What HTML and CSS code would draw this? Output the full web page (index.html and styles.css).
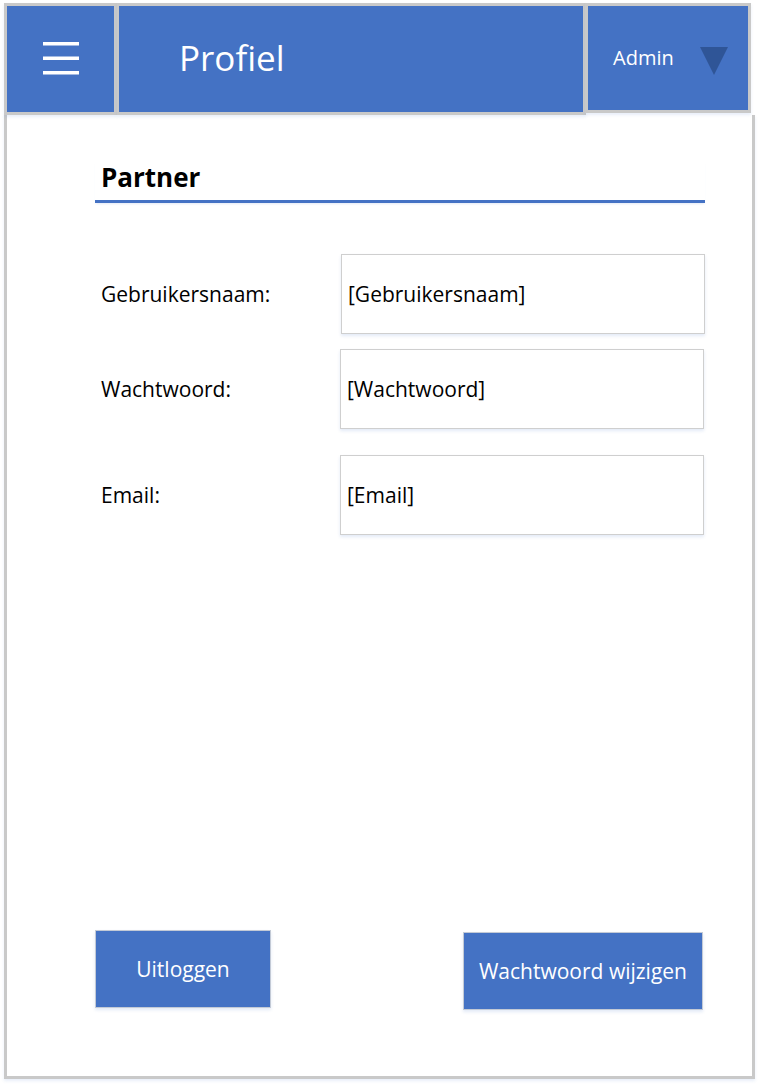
FILE: index.html
```html
<!DOCTYPE html>
<html lang="nl">
<head>
<meta charset="utf-8">
<title>Profiel</title>
<link rel="stylesheet" href="styles.css">
</head>
<body>
<div class="page">
  <header class="topbar">
    <div class="box menu-box">
      <svg class="hamburger" width="36" height="33" viewBox="0 0 36 33" aria-hidden="true">
        <rect x="0" y="0" width="36" height="3.5" fill="#fff"/>
        <rect x="0" y="14.5" width="36" height="3.5" fill="#fff"/>
        <rect x="0" y="29" width="36" height="3.5" fill="#fff"/>
      </svg>
    </div>
    <div class="box title-box"><h1 class="title">Profiel</h1></div>
    <div class="box user-box">
      <span class="user-name">Admin</span>
      <svg class="caret" width="28" height="28" viewBox="0 0 28 28" aria-hidden="true">
        <polygon points="0,0 28,0 14,28" fill="#2F5597"/>
      </svg>
    </div>
  </header>
  <main class="frame">
    <section class="profile">
      <h2 class="section-title">Partner</h2>
      <div class="field field-first">
        <span class="field-label">Gebruikersnaam:</span>
        <div class="field-input">[Gebruikersnaam]</div>
      </div>
      <div class="field field-second">
        <span class="field-label">Wachtwoord:</span>
        <div class="field-input">[Wachtwoord]</div>
      </div>
      <div class="field field-third">
        <span class="field-label">Email:</span>
        <div class="field-input">[Email]</div>
      </div>
    </section>
    <div class="actions">
      <button class="btn btn-logout">Uitloggen</button>
      <button class="btn btn-change">Wachtwoord wijzigen</button>
    </div>
  </main>
</div>
</body>
</html>
```
FILE: styles.css
```css
* { box-sizing: border-box; }

html, body {
  margin: 0;
  padding: 0;
  background: #ffffff;
}

body {
  font-family: "Open Sans", "Noto Sans", "DejaVu Sans", sans-serif;
  color: #000;
}

.page {
  width: 758px;
  height: 1087px;
  padding: 3px 5px 0 4px;
}

.topbar {
  display: flex;
  height: 112px;
  position: relative;
  z-index: 1;
}

.box {
  background: #4472C4;
  border: 3px solid #c9c9c9;
  box-shadow: 0 2px 3px rgba(68, 114, 196, 0.12);
}

.menu-box {
  width: 113px;
  display: flex;
  align-items: center;
  justify-content: center;
}

.hamburger { display: block; margin-bottom: 2px; }

.title-box {
  width: 469px;
  border-left-width: 2px;
  display: flex;
  align-items: center;
  padding-left: 60px;
}

.title {
  margin: 0;
  font-weight: 400;
  font-size: 35px;
  color: #fff;
  line-height: 1;
  padding-bottom: 4px;
}

.user-box {
  width: 166px;
  height: 110px;
  margin-left: -1px;
  display: flex;
  align-items: center;
  padding-left: 25px;
}

.user-name {
  color: #fff;
  font-size: 20px;
  padding-bottom: 2px;
}

.caret {
  display: block;
  margin-left: 26px;
  margin-top: 6px;
}

.frame {
  height: 964px;
  border: 3px solid #c9c9c9;
  border-top: 0;
  display: flex;
  flex-direction: column;
  box-shadow: 0 2px 3px rgba(68, 114, 196, 0.12);
  margin-right: -2px;
}

.profile {
  margin-left: 88px;
  width: 610px;
  padding-top: 47px;
}

.section-title {
  margin: 0;
  padding: 0 0 8px 6px;
  font-size: 26px;
  font-weight: 700;
  line-height: 30px;
  border-bottom: 3px solid #4472C4;
  box-shadow: 0 2px 2px -1px rgba(68, 114, 196, 0.15);
}

.field {
  display: flex;
  align-items: center;
}

.field-first { margin-top: 51px; }
.field-second { margin-top: 15px; margin-right: 1px; }
.field-third { margin-top: 26px; margin-right: 1px; }

.field-label {
  width: 245px;
  padding-left: 6px;
  font-size: 21px;
}

.field-first .field-label { width: 246px; }

.field-input {
  flex: 1;
  height: 80px;
  border: 1px solid #cfcfcf;
  box-shadow: 0 2px 3px rgba(68, 114, 196, 0.15);
  display: flex;
  align-items: center;
  padding-left: 6px;
  font-size: 21px;
}

.actions {
  margin-top: auto;
  display: flex;
  justify-content: space-between;
  padding: 0 49px 66px 88px;
}

.btn {
  background: #4472C4;
  color: #fff;
  font-family: "Open Sans", "Noto Sans", "DejaVu Sans", sans-serif;
  font-size: 21px;
  border: 1px solid #c3cad6;
  box-shadow: 0 2px 3px rgba(68, 114, 196, 0.15);
  height: 78px;
  padding: 0;
  cursor: pointer;
}

.btn-logout {
  width: 176px;
  align-self: flex-start;
  margin-bottom: 2px;
}

.btn-change {
  width: 240px;
  align-self: flex-end;
}
```
